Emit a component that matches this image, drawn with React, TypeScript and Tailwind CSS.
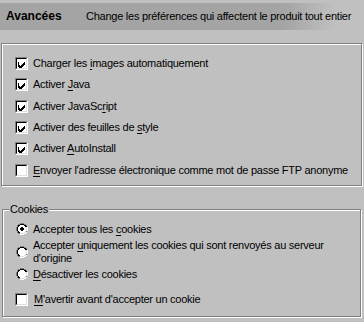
import React from "react";

function Check({ checked }: { checked: boolean }) {
  return (
    <div className="w-[13px] h-[13px] shrink-0 border border-t-[#808080] border-l-[#808080] border-b-white border-r-white">
      <div className="w-full h-full bg-white border border-t-black border-l-black border-b-[#dfdfdf] border-r-[#dfdfdf] flex items-center justify-center">
        {checked && (
          <svg width="9" height="9" viewBox="0 0 9 9" shapeRendering="crispEdges">
            <path d="M1 3h1v3h1v1h1v-1h1v-1h1v-1h1v-1h1v3h-1v1h-1v1h-1v1h-1v1h-1v-1h-1v-1h-1z" fill="black" />
          </svg>
        )}
      </div>
    </div>
  );
}

function Radio({ checked }: { checked: boolean }) {
  return (
    <svg width="12" height="12" viewBox="0 0 12 12" shapeRendering="crispEdges" className="shrink-0">
      <path d="M4 0h4v1h2v1h1v2h1v4h-1v2h-1v1h-2v1h-4v-1h-2v-1h-1v-2h-1v-4h1v-2h1v-1h2z" fill="#808080" />
      <path d="M11 4h1v4h-1v2h-1v1h-2v1h-4v-1h4v-1h2v-1h1z" fill="#ffffff" />
      <path d="M4 1h4v1h2v1h1v5h-1v2h-2v1h-4v-1h-2v-2h-1v-4h1v-2h2z" fill="#000000" />
      <path d="M10 4h1v4h-1v2h-2v1h-4v-1h4v-1h1v-1h1z" fill="#dfdfdf" />
      <path d="M4 2h4v1h1v1h1v4h-1v1h-1v1h-4v-1h-1v-1h-1v-4h1v-1h1z" fill="#ffffff" />
      {checked && <path d="M5 4h2v1h1v2h-1v1h-2v-1h-1v-2h1z" fill="#000000" />}
    </svg>
  );
}

function CheckRow({ h, checked, children }: { h: string; checked: boolean; children: React.ReactNode }) {
  return (
    <div className={`${h} flex items-center pl-[13px] gap-[5px]`}>
      <Check checked={checked} />
      <span className="whitespace-nowrap">{children}</span>
    </div>
  );
}

export default function App() {
  return (
    <div
      className="w-[364px] h-[322px] bg-[#c0c0c0] text-black text-[11px] tracking-[-0.25px] leading-[13px] pt-[3px] overflow-hidden"
      style={{ fontFamily: '"Liberation Sans", Arial, sans-serif' }}
    >
      <div className="h-[27px] flex items-center bg-[linear-gradient(to_right,#a4a4a4_0%,#a4a4a4_78%,#c0c0c0_92%)]">
        <span className="font-bold pl-[6px] w-[86px] text-[12px] tracking-[0px]">Avancées</span>
        <span className="whitespace-nowrap">Change les préférences qui affectent le produit tout entier</span>
      </div>

      <div className="mt-[13px] ml-[1px] w-[361px] h-[143px] border border-[#808080] shadow-[1px_1px_0_#ffffff,inset_1px_1px_0_#ffffff] pt-[8px]">
        <CheckRow h="h-[22px]" checked>
          Charger les <u className="underline-offset-[2px]">i</u>mages automatiquement
        </CheckRow>
        <CheckRow h="h-[21px]" checked>
          Activer <u className="underline-offset-[2px]">J</u>ava
        </CheckRow>
        <CheckRow h="h-[22px]" checked>
          Activer JavaSc<u className="underline-offset-[2px]">r</u>ipt
        </CheckRow>
        <CheckRow h="h-[21px]" checked>
          Activer des feuilles de <u className="underline-offset-[2px]">s</u>tyle
        </CheckRow>
        <CheckRow h="h-[21px]" checked>
          Activer <u className="underline-offset-[2px]">A</u>utoInstall
        </CheckRow>
        <CheckRow h="h-[22px]" checked={false}>
          <u className="underline-offset-[2px]">E</u>nvoyer l'adresse électronique comme mot de passe FTP anonyme
        </CheckRow>
      </div>

      <div className="relative mt-[23px] ml-[2px] w-[359px] h-[108px] border border-[#808080] shadow-[1px_1px_0_#ffffff,inset_1px_1px_0_#ffffff] pt-[11px]">
        <span className="absolute left-[6px] top-[-7px] bg-[#c0c0c0] px-[1px]">Cookies</span>
        <div className="h-[16px] flex items-center pl-[13px] gap-[5px]">
          <Radio checked />
          <span className="whitespace-nowrap">
            Accepter tous les <u className="underline-offset-[2px]">c</u>ookies
          </span>
        </div>
        <div className="h-[29px] flex items-center pl-[13px] gap-[5px]">
          <Radio checked={false} />
          <span className="whitespace-nowrap">
            Accepter <u className="underline-offset-[2px]">u</u>niquement les cookies qui sont renvoyés au serveur
            <br />
            d'origine
          </span>
        </div>
        <div className="h-[16px] flex items-center pl-[13px] gap-[5px]">
          <Radio checked={false} />
          <span className="whitespace-nowrap">
            <u className="underline-offset-[2px]">D</u>ésactiver les cookies
          </span>
        </div>
        <div className="h-[34px] flex items-center pl-[12px] gap-[6px]">
          <Check checked={false} />
          <span className="whitespace-nowrap">
            <u className="underline-offset-[2px]">M</u>'avertir avant d'accepter un cookie
          </span>
        </div>
      </div>
    </div>
  );
}
